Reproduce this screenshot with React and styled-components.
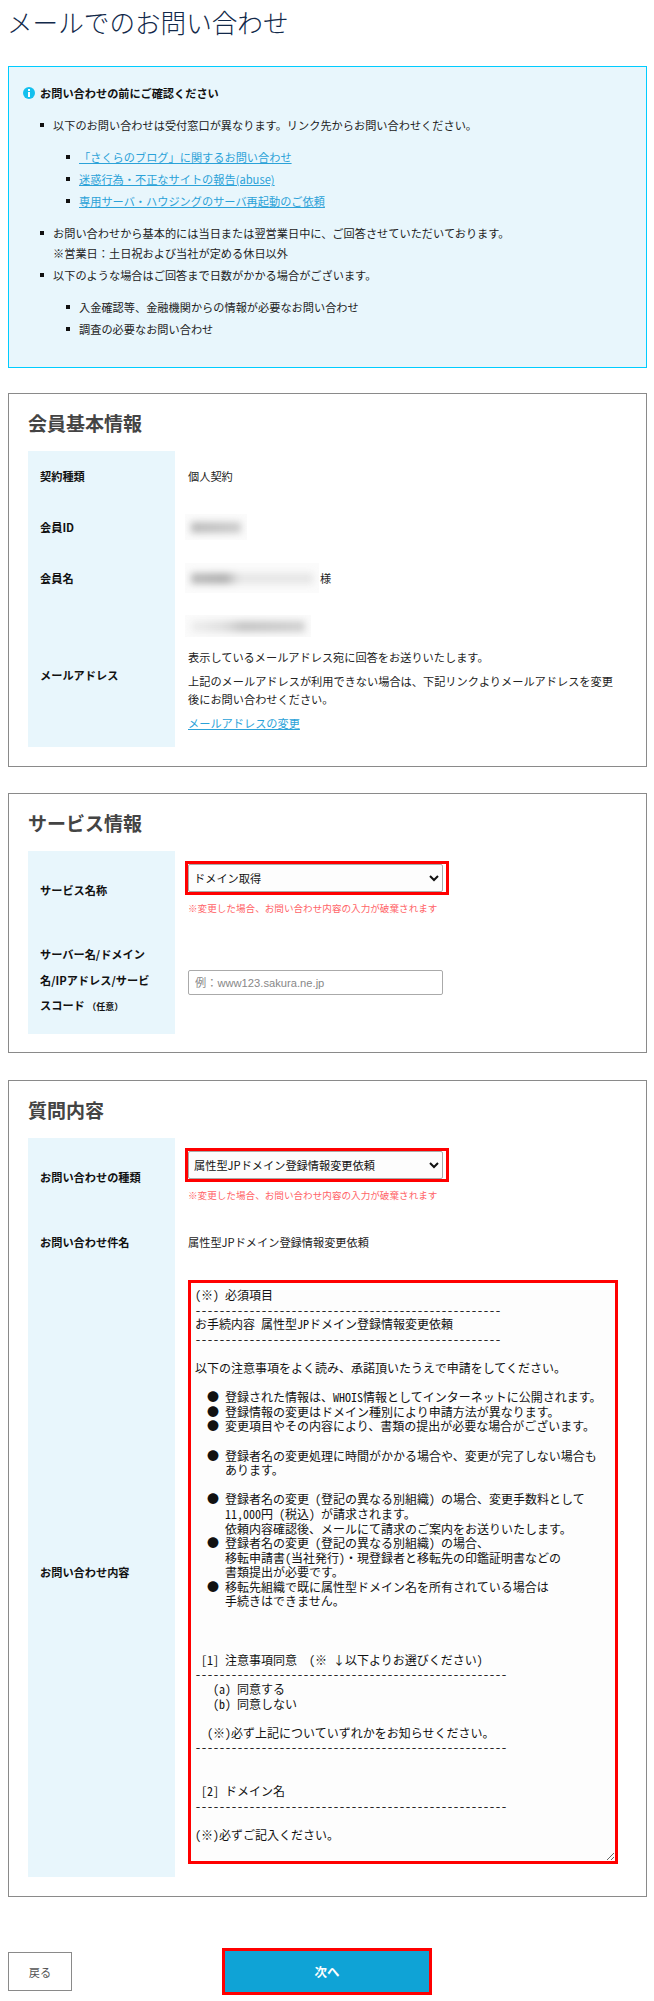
import React from 'react';
import styled, { createGlobalStyle } from 'styled-components';

const GlobalStyle = createGlobalStyle`
  html, body {
    margin: 0;
    padding: 0;
    background: #fff;
  }
  body {
    font-family: "Noto Sans CJK JP", "Liberation Sans", sans-serif;
    font-size: 11.2px;
    color: #222;
  }
`;

const Page = styled.div`
  width: 654px;
  height: 2001px;
  box-sizing: border-box;
  padding: 0 7px 0 8px;
  overflow: hidden;
`;

const PageTitle = styled.h1`
  margin: 0 0 0 -1px;
  height: 66px;
  padding-top: 4px;
  box-sizing: border-box;
  font-size: 25.6px;
  line-height: 36px;
  font-weight: 300;
  color: #12294a;
`;

const NoticeBox = styled.div`
  box-sizing: border-box;
  height: 302px;
  padding: 16px 14px 0 14px;
  background: #e8f6fc;
  border: 1px solid #00ccff;
  margin-bottom: 25px;
`;

const NoticeHead = styled.div`
  display: flex;
  align-items: center;
  gap: 5px;
  height: 20px;
  margin-bottom: 12px;
  font-weight: 700;
  color: #111;
`;

const List = styled.ul`
  margin: ${(p) => (p.$nested ? '12px 0 12px' : '0')};
  padding: 0 0 0 ${(p) => (p.$nested ? '26px' : '30px')};
  list-style: none;
`;

const Item = styled.li`
  position: relative;
  line-height: 20px;
  margin-bottom: 2px;
  &::before {
    content: '';
    position: absolute;
    left: -13px;
    top: 8px;
    width: 4px;
    height: 4px;
    background: #111;
  }
`;

const TextLink = styled.a`
  color: #2ba2d8;
  text-decoration: underline;
`;

const Section = styled.section`
  box-sizing: border-box;
  height: ${(p) => p.$height}px;
  padding: 0 20px 0 19px;
  border: 1px solid #8a8a8a;
  margin-bottom: ${(p) => p.$gap}px;
`;

const SectionTitle = styled.h2`
  margin: 0;
  height: 57px;
  padding-top: 16px;
  box-sizing: border-box;
  font-size: 19px;
  line-height: 26px;
  font-weight: 700;
  color: #444;
`;

const Table = styled.div`
  display: grid;
  grid-template-columns: 147px 1fr;
`;

const Label = styled.div`
  display: flex;
  align-items: center;
  box-sizing: border-box;
  padding: 0 18px 1px 12px;
  background: #e8f6fc;
  font-weight: 700;
  color: #111;
  line-height: ${(p) => p.$lineHeight || 20}px;
  height: ${(p) => p.$height}px;
`;

const Value = styled.div`
  box-sizing: border-box;
  padding: 0 0 1px 13px;
  display: flex;
  flex-direction: column;
  justify-content: ${(p) => (p.$top ? 'flex-start' : 'center')};
  align-items: flex-start;
  line-height: 20px;
  height: ${(p) => p.$height}px;
`;

const Small = styled.span`
  font-size: 9px;
`;

const NameRow = styled.div`
  display: flex;
  align-items: center;
  gap: 1px;
`;

const Masked = styled.div`
  width: ${(p) => p.$width}px;
  height: ${(p) => p.$height}px;
  margin: ${(p) => p.$top || 0}px 0 0 -3px;
  background: #fbfbfb;
  overflow: hidden;
  flex: none;
  &::after {
    content: '';
    display: block;
    height: 11px;
    margin: ${(p) => (p.$height - 11) / 2}px 6px 0;
    background: ${(p) => p.$tone};
    filter: blur(3.5px);
  }
`;

const EmailNote = styled.p`
  margin: ${(p) => p.$gap}px 0 0;
  width: 430px;
  line-height: 18px;
`;

const RedFrame = styled.div`
  display: inline-flex;
  margin: 10px 0 0 -3px;
  border: 3px solid #f00;
  padding-right: 3px;
`;

const Select = styled.select`
  width: 255px;
  height: 28px;
  padding: 0 0 0 1px;
  box-sizing: border-box;
  border: 1px solid #aaa;
  border-radius: 2px;
  background: #fdfdfd;
  color: #111;
  font-family: inherit;
  font-size: 11.2px;
`;

const Hint = styled.div`
  margin-top: 3px;
  font-size: 9.6px;
  line-height: 20px;
  color: #ff6468;
`;

const TextInput = styled.input`
  width: 255px;
  height: 25px;
  margin-top: 3px;
  box-sizing: border-box;
  padding: 0 6px;
  border: 1px solid #aaa;
  border-radius: 2px;
  font-family: "Liberation Sans", "Noto Sans CJK JP", sans-serif;
  font-size: 11.2px;
  &::placeholder {
    color: #888;
  }
`;

const TextArea = styled.textarea`
  display: block;
  width: 430px;
  height: 584px;
  margin-top: 12px;
  box-sizing: border-box;
  padding: 5px 4px 0 4px;
  border: 3px solid #f00;
  outline: none;
  background: #fdfdfd;
  color: #111;
  font-family: "Noto Sans CJK JP", monospace;
  font-feature-settings: "hwid";
  font-size: 12px;
  line-height: 14.6px;
  white-space: pre;
  overflow: hidden;
`;

const ButtonRow = styled.div`
  display: flex;
  align-items: center;
`;

const BackButton = styled.button`
  width: 64px;
  height: 39px;
  border: 1px solid #8a8a8a;
  background: #fff;
  color: #555;
  font-family: inherit;
  font-size: 11.2px;
  margin-right: 150px;
`;

const NextButton = styled.button`
  width: 210px;
  height: 47px;
  box-sizing: border-box;
  border: 3px solid #f00;
  background: #0fa3d6;
  color: #fff;
  font-family: inherit;
  font-size: 12.5px;
  font-weight: 700;
`;

const InfoIcon = () => (
  <svg width="12" height="12" viewBox="0 0 12 12">
    <circle cx="6" cy="6" r="6" fill="#14c0ee" />
    <rect x="5" y="2" width="2" height="2" fill="#fff" />
    <rect x="5" y="5" width="2" height="5" fill="#fff" />
  </svg>
);

const dashes = '-'.repeat(51);
const longDashes = '-'.repeat(52);

// half-width parens with a space keep the full-width spacing of the original text under hwid
const inquiryText = [
  '(※) 必須項目',
  dashes,
  'お手続内容 属性型JPドメイン登録情報変更依頼',
  dashes,
  '',
  '以下の注意事項をよく読み、承諾頂いたうえで申請をしてください。',
  '',
  '  ● 登録された情報は、WHOIS情報としてインターネットに公開されます。',
  '  ● 登録情報の変更はドメイン種別により申請方法が異なります。',
  '  ● 変更項目やその内容により、書類の提出が必要な場合がございます。',
  '',
  '  ● 登録者名の変更処理に時間がかかる場合や、変更が完了しない場合も',
  '     あります。',
  '',
  '  ● 登録者名の変更 (登記の異なる別組織) の場合、変更手数料として',
  '     11,000円 (税込) が請求されます。',
  '     依頼内容確認後、メールにて請求のご案内をお送りいたします。',
  '  ● 登録者名の変更 (登記の異なる別組織) の場合、',
  '     移転申請書(当社発行)・現登録者と移転先の印鑑証明書などの',
  '     書類提出が必要です。',
  '  ● 移転先組織で既に属性型ドメイン名を所有されている場合は',
  '     手続きはできません。',
  '',
  '',
  '',
  ' [1] 注意事項同意  (※ ↓以下よりお選びください)',
  longDashes,
  '   (a) 同意する',
  '   (b) 同意しない',
  '',
  '  (※)必ず上記についていずれかをお知らせください。',
  longDashes,
  '',
  '',
  ' [2] ドメイン名',
  longDashes,
  '',
  '(※)必ずご記入ください。',
  '',
].join('\n');

const App = () => {
  return (
    <Page>
      <GlobalStyle />
      <PageTitle>メールでのお問い合わせ</PageTitle>

      <NoticeBox>
        <NoticeHead>
          <InfoIcon />
          お問い合わせの前にご確認ください
        </NoticeHead>
        <List>
          <Item>
            以下のお問い合わせは受付窓口が異なります。リンク先からお問い合わせください。
            <List $nested>
              <Item>
                <TextLink href="#">「さくらのブログ」に関するお問い合わせ</TextLink>
              </Item>
              <Item>
                <TextLink href="#">迷惑行為・不正なサイトの報告(abuse)</TextLink>
              </Item>
              <Item>
                <TextLink href="#">専用サーバ・ハウジングのサーバ再起動のご依頼</TextLink>
              </Item>
            </List>
          </Item>
          <Item>
            お問い合わせから基本的には当日または翌営業日中に、ご回答させていただいております。
            <br />
            ※営業日：土日祝および当社が定める休日以外
          </Item>
          <Item>
            以下のような場合はご回答まで日数がかかる場合がございます。
            <List $nested>
              <Item>入金確認等、金融機関からの情報が必要なお問い合わせ</Item>
              <Item>調査の必要なお問い合わせ</Item>
            </List>
          </Item>
        </List>
      </NoticeBox>

      <Section $height={374} $gap={26}>
        <SectionTitle>会員基本情報</SectionTitle>
        <Table>
          <Label $height={51}>契約種類</Label>
          <Value $height={51}>個人契約</Value>
          <Label $height={51}>会員ID</Label>
          <Value $height={51}>
            <Masked $width={62} $height={26} $tone="linear-gradient(90deg, #bbb, #ccc)" />
          </Value>
          <Label $height={51}>会員名</Label>
          <Value $height={51}>
            <NameRow>
              <Masked $width={134} $height={30} $tone="linear-gradient(90deg, #bbb, #b0b0b0 28%, #e6e6e6 40%, #e6e6e6)" />
              様
            </NameRow>
          </Value>
          <Label $height={143}>メールアドレス</Label>
          <Value $height={143} $top>
            <Masked $width={126} $height={22} $top={11} $tone="linear-gradient(90deg, #eee, #ddd 30%, #c4c4c4 45%, #d0d0d0)" />
            <EmailNote $gap={11}>表示しているメールアドレス宛に回答をお送りいたします。</EmailNote>
            <EmailNote $gap={6}>
              上記のメールアドレスが利用できない場合は、下記リンクよりメールアドレスを変更後にお問い合わせください。
            </EmailNote>
            <EmailNote $gap={6}>
              <TextLink href="#">メールアドレスの変更</TextLink>
            </EmailNote>
          </Value>
        </Table>
      </Section>

      <Section $height={260} $gap={27}>
        <SectionTitle>サービス情報</SectionTitle>
        <Table>
          <Label $height={78}>サービス名称</Label>
          <Value $height={78} $top>
            <RedFrame>
              <Select defaultValue="domain">
                <option value="domain">ドメイン取得</option>
              </Select>
            </RedFrame>
            <Hint>※変更した場合、お問い合わせ内容の入力が破棄されます</Hint>
          </Value>
          <Label $height={105} $lineHeight={25.5}>
            <div>
              サーバー名/ドメイン名/IPアドレス/サービスコード <Small>（任意）</Small>
            </div>
          </Label>
          <Value $height={105}>
            <TextInput placeholder="例：www123.sakura.ne.jp" />
          </Value>
        </Table>
      </Section>

      <Section $height={817} $gap={51}>
        <SectionTitle>質問内容</SectionTitle>
        <Table>
          <Label $height={78}>お問い合わせの種類</Label>
          <Value $height={78} $top>
            <RedFrame>
              <Select defaultValue="jp">
                <option value="jp">属性型JPドメイン登録情報変更依頼</option>
              </Select>
            </RedFrame>
            <Hint>※変更した場合、お問い合わせ内容の入力が破棄されます</Hint>
          </Value>
          <Label $height={52}>お問い合わせ件名</Label>
          <Value $height={52}>属性型JPドメイン登録情報変更依頼</Value>
          <Label $height={609}>お問い合わせ内容</Label>
          <Value $height={609} $top>
            <TextArea defaultValue={inquiryText} readOnly />
          </Value>
        </Table>
      </Section>

      <ButtonRow>
        <BackButton>戻る</BackButton>
        <NextButton>次へ</NextButton>
      </ButtonRow>
    </Page>
  );
};

export default App;
